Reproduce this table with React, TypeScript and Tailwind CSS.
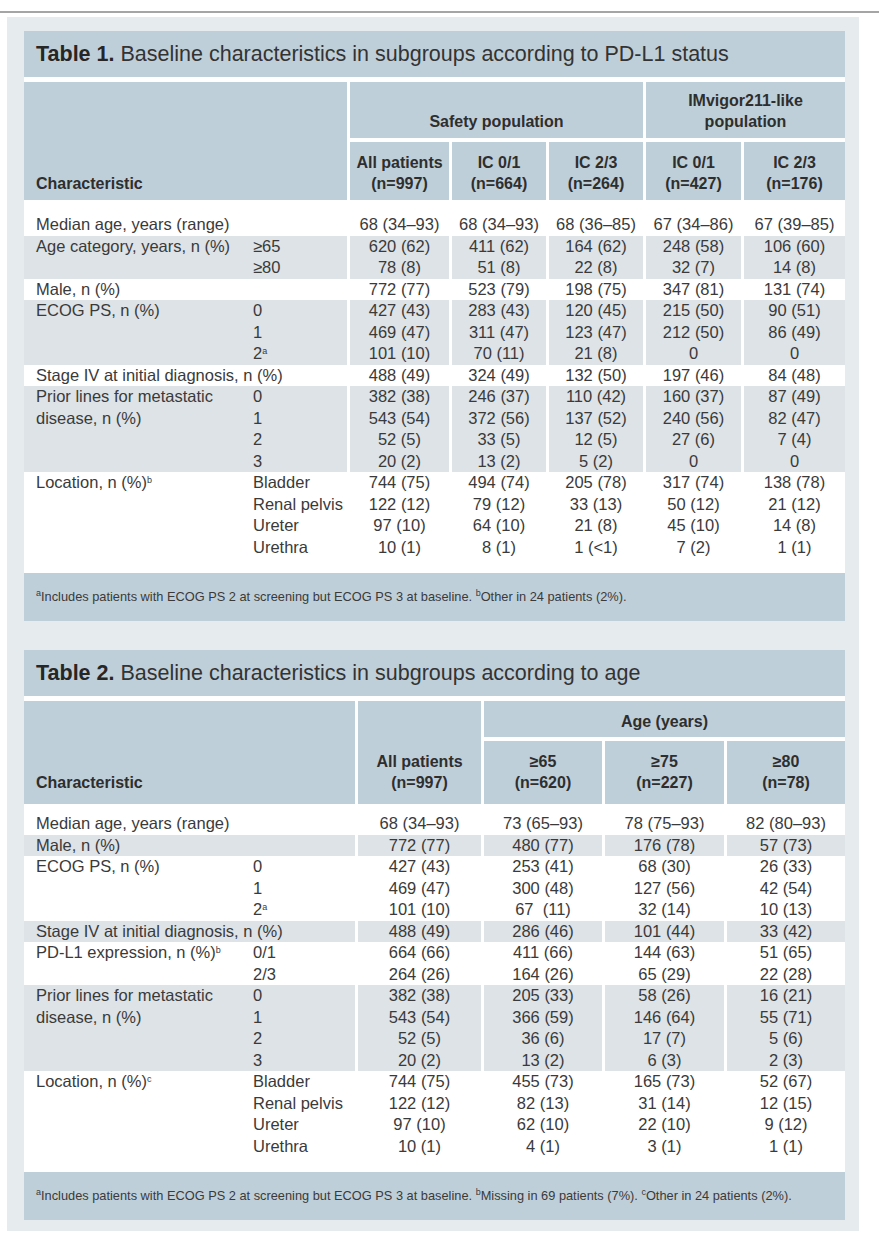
import type { ReactNode } from "react";

type BodyRow = {
  label: ReactNode;
  subs?: ReactNode[];
  vals: ReactNode[][];
  shade?: boolean;
  pad?: string;
};

const Sup = ({ c }: { c: string }) => (
  <sup className="text-[9px] -top-[0.55em]">{c}</sup>
);

const table1: BodyRow[] = [
  {
    label: "Median age, years (range)",
    vals: [["68 (34–93)"], ["68 (34–93)"], ["68 (36–85)"], ["67 (34–86)"], ["67 (39–85)"]],
    pad: "pt-[14px]",
  },
  {
    label: "Age category, years, n (%)",
    subs: ["≥65", "≥80"],
    vals: [
      ["620 (62)", "78 (8)"],
      ["411 (62)", "51 (8)"],
      ["164 (62)", "22 (8)"],
      ["248 (58)", "32 (7)"],
      ["106 (60)", "14 (8)"],
    ],
    shade: true,
  },
  {
    label: "Male, n (%)",
    vals: [["772 (77)"], ["523 (79)"], ["198 (75)"], ["347 (81)"], ["131 (74)"]],
  },
  {
    label: "ECOG PS, n (%)",
    subs: ["0", "1", <>2<Sup c="a" /></>],
    vals: [
      ["427 (43)", "469 (47)", "101 (10)"],
      ["283 (43)", "311 (47)", "70 (11)"],
      ["120 (45)", "123 (47)", "21 (8)"],
      ["215 (50)", "212 (50)", "0"],
      ["90 (51)", "86 (49)", "0"],
    ],
    shade: true,
  },
  {
    label: "Stage IV at initial diagnosis, n (%)",
    vals: [["488 (49)"], ["324 (49)"], ["132 (50)"], ["197 (46)"], ["84 (48)"]],
  },
  {
    label: (
      <>
        Prior lines for metastatic
        <br />
        disease, n (%)
      </>
    ),
    subs: ["0", "1", "2", "3"],
    vals: [
      ["382 (38)", "543 (54)", "52 (5)", "20 (2)"],
      ["246 (37)", "372 (56)", "33 (5)", "13 (2)"],
      ["110 (42)", "137 (52)", "12 (5)", "5 (2)"],
      ["160 (37)", "240 (56)", "27 (6)", "0"],
      ["87 (49)", "82 (47)", "7 (4)", "0"],
    ],
    shade: true,
  },
  {
    label: <>Location, n (%)<Sup c="b" /></>,
    subs: ["Bladder", "Renal pelvis", "Ureter", "Urethra"],
    vals: [
      ["744 (75)", "122 (12)", "97 (10)", "10 (1)"],
      ["494 (74)", "79 (12)", "64 (10)", "8 (1)"],
      ["205 (78)", "33 (13)", "21 (8)", "1 (<1)"],
      ["317 (74)", "50 (12)", "45 (10)", "7 (2)"],
      ["138 (78)", "21 (12)", "14 (8)", "1 (1)"],
    ],
    pad: "pb-[15px]",
  },
];

const table2: BodyRow[] = [
  {
    label: "Median age, years (range)",
    vals: [["68 (34–93)"], ["73 (65–93)"], ["78 (75–93)"], ["82 (80–93)"]],
    pad: "pt-[9px]",
  },
  {
    label: "Male, n (%)",
    vals: [["772 (77)"], ["480 (77)"], ["176 (78)"], ["57 (73)"]],
    shade: true,
  },
  {
    label: "ECOG PS, n (%)",
    subs: ["0", "1", <>2<Sup c="a" /></>],
    vals: [
      ["427 (43)", "469 (47)", "101 (10)"],
      ["253 (41)", "300 (48)", "67\u00a0 (11)"],
      ["68 (30)", "127 (56)", "32 (14)"],
      ["26 (33)", "42 (54)", "10 (13)"],
    ],
  },
  {
    label: "Stage IV at initial diagnosis, n (%)",
    vals: [["488 (49)"], ["286 (46)"], ["101 (44)"], ["33 (42)"]],
    shade: true,
  },
  {
    label: <>PD-L1 expression, n (%)<Sup c="b" /></>,
    subs: ["0/1", "2/3"],
    vals: [
      ["664 (66)", "264 (26)"],
      ["411 (66)", "164 (26)"],
      ["144 (63)", "65 (29)"],
      ["51 (65)", "22 (28)"],
    ],
  },
  {
    label: (
      <>
        Prior lines for metastatic
        <br />
        disease, n (%)
      </>
    ),
    subs: ["0", "1", "2", "3"],
    vals: [
      ["382 (38)", "543 (54)", "52 (5)", "20 (2)"],
      ["205 (33)", "366 (59)", "36 (6)", "13 (2)"],
      ["58 (26)", "146 (64)", "17 (7)", "6 (3)"],
      ["16 (21)", "55 (71)", "5 (6)", "2 (3)"],
    ],
    shade: true,
  },
  {
    label: <>Location, n (%)<Sup c="c" /></>,
    subs: ["Bladder", "Renal pelvis", "Ureter", "Urethra"],
    vals: [
      ["744 (75)", "122 (12)", "97 (10)", "10 (1)"],
      ["455 (73)", "82 (13)", "62 (10)", "4 (1)"],
      ["165 (73)", "31 (14)", "22 (10)", "3 (1)"],
      ["52 (67)", "12 (15)", "9 (12)", "1 (1)"],
    ],
    pad: "pb-[15px]",
  },
];

const Body = ({ rows, cols }: { rows: BodyRow[]; cols: string }) => (
  <div className={`grid ${cols} gap-x-[3px] text-[16.5px] leading-[21.5px] text-[#3a3a3a]`}>
    {rows.map((r, i) => {
      const bg = r.shade ? "bg-[#dde3e7]" : "bg-white";
      const pad = r.pad ?? "";
      return [
        <div key={`l${i}`} className={`${bg} ${pad} pl-3 flex`}>
          {r.subs ? (
            <>
              <div className="w-[217px] shrink-0">{r.label}</div>
              <div>
                {r.subs.map((s, j) => (
                  <div key={j}>{s}</div>
                ))}
              </div>
            </>
          ) : (
            <div className="whitespace-nowrap">{r.label}</div>
          )}
        </div>,
        ...r.vals.map((col, c) => (
          <div key={`v${i}-${c}`} className={`${bg} ${pad} text-center`}>
            {col.map((v, j) => (
              <div key={j} className="whitespace-pre">
                {v}
              </div>
            ))}
          </div>
        )),
      ];
    })}
  </div>
);

const Title = ({ num, text }: { num: string; text: string }) => (
  <div className="h-[46px] bg-[#bfcfd9] flex items-center pl-3 text-[21.5px] text-[#333]">
    <span className="font-bold text-[#262626]">Table {num}.</span>
    <span className="ml-[6px]">{text}</span>
  </div>
);

const Footnote = ({ children }: { children: ReactNode }) => (
  <div className="h-[48px] bg-[#bfcfd9] flex items-center pl-3 text-[12.8px] text-[#3a3a3a]">
    <p>{children}</p>
  </div>
);

const hd = "bg-[#bfcfd9] font-bold text-[16px] leading-[21px] text-[#2e2e2e]";

const TableOne = () => (
  <div className="bg-white">
    <Title num="1" text="Baseline characteristics in subgroups according to PD-L1 status" />
    <div className="mt-[5px] grid grid-cols-[323px_99px_94px_94px_95px_101px] grid-rows-[56px_58px] gap-x-[3px] gap-y-[4px]">
      <div className={`${hd} row-span-2 flex items-end pl-3 pb-[6px]`}>Characteristic</div>
      <div className={`${hd} col-span-3 flex items-end justify-center pb-[6px]`}>Safety population</div>
      <div className={`${hd} col-span-2 flex flex-col items-center justify-end pb-[6px]`}>
        <div>IMvigor211-like</div>
        <div>population</div>
      </div>
      {[
        ["All patients", "(n=997)"],
        ["IC 0/1", "(n=664)"],
        ["IC 2/3", "(n=264)"],
        ["IC 0/1", "(n=427)"],
        ["IC 2/3", "(n=176)"],
      ].map(([a, b], i) => (
        <div key={i} className={`${hd} flex flex-col items-center justify-end pb-[6px]`}>
          <div>{a}</div>
          <div>{b}</div>
        </div>
      ))}
    </div>
    <Body rows={table1} cols="grid-cols-[323px_99px_94px_94px_95px_101px]" />
    <Footnote>
      <Sup c="a" />
      Includes patients with ECOG PS 2 at screening but ECOG PS 3 at baseline. <Sup c="b" />
      Other in 24 patients (2%).
    </Footnote>
  </div>
);

const TableTwo = () => (
  <div className="bg-white">
    <Title num="2" text="Baseline characteristics in subgroups according to age" />
    <div className="mt-[5px] grid grid-cols-[331px_123px_118px_119px_118px] grid-rows-[36px_63px] gap-x-[3px] gap-y-[4px]">
      <div className={`${hd} row-span-2 flex items-end pl-3 pb-[11px]`}>Characteristic</div>
      <div className={`${hd} row-span-2 flex flex-col items-center justify-end pb-[11px]`}>
        <div>All patients</div>
        <div>(n=997)</div>
      </div>
      <div className={`${hd} col-span-3 flex items-end justify-center pb-[5px]`}>Age (years)</div>
      {[
        ["≥65", "(n=620)"],
        ["≥75", "(n=227)"],
        ["≥80", "(n=78)"],
      ].map(([a, b], i) => (
        <div key={i} className={`${hd} flex flex-col items-center justify-end pb-[11px]`}>
          <div>{a}</div>
          <div>{b}</div>
        </div>
      ))}
    </div>
    <Body rows={table2} cols="grid-cols-[331px_123px_118px_119px_118px]" />
    <Footnote>
      <Sup c="a" />
      Includes patients with ECOG PS 2 at screening but ECOG PS 3 at baseline. <Sup c="b" />
      Missing in 69 patients (7%). <Sup c="c" />
      Other in 24 patients (2%).
    </Footnote>
  </div>
);

export default function App() {
  return (
    <div className="min-h-screen bg-white font-['Liberation_Sans',Arial,sans-serif]">
      <div className="h-[11px]" />
      <div className="h-[2px] bg-[#a5a5a5]" />
      <div className="ml-[7px] mt-[4px] w-[852px] bg-[#e6ebee] pl-[17px] pr-[14px] pt-[14px] pb-[11px]">
        <TableOne />
        <div className="h-[29px]" />
        <TableTwo />
      </div>
    </div>
  );
}
